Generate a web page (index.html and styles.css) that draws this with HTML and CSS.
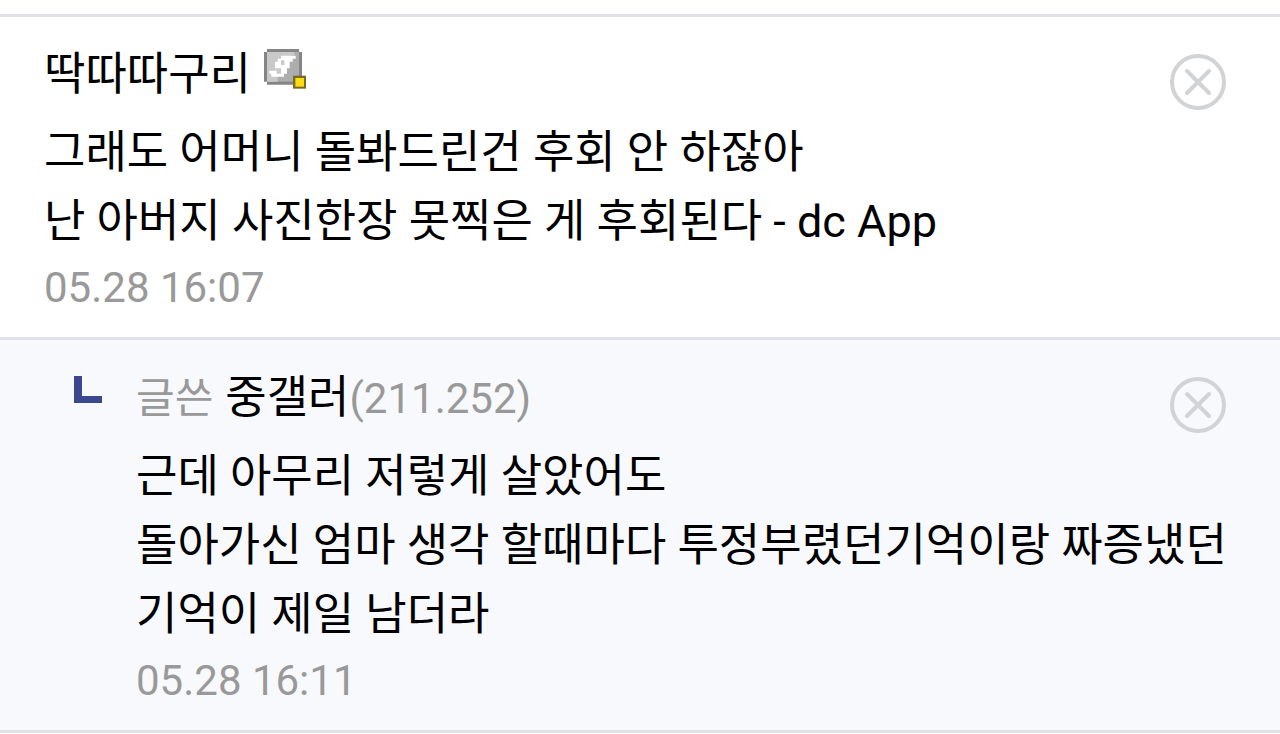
FILE: index.html
```html
<!DOCTYPE html>
<html lang="ko">
<head>
  <meta charset="UTF-8" />
  <meta name="viewport" content="width=device-width, initial-scale=1.0" />
  <title>댓글</title>
  <link rel="stylesheet" href="styles.css">
</head>
<body>
  <ul class="comment-list">
    <li class="comment">
      <div class="comment-body">
        <div class="writer">
          <span class="nick">딱따따구리</span>
          <svg class="nick-icon" viewBox="0 0 132 120" aria-hidden="true">
            <path d="M12 0h96v9h9v89h-9v9H12v-9H3V9h9z" fill="#858585" />
            <path d="M12 9h96v89H12z" fill="#adadad" />
            <path d="M12 9h82v10H84v10H74v10H64v20H54v20H44v19H12z" fill="#c9c9c9" />
            <path fill-rule="evenodd" d="M54 20h44v9h-9v9h-9v20h-8v16h-9v9H25v-9h-6v-9h22v9h13V58H36V38h8v-9h10zM54 34v14h10V34z" fill="#fff" />
            <path d="M90 80h39v39H90z" fill="#7a6a20" />
            <path d="M97 87h26v26H97z" fill="#fbdc16" />
          </svg>
        </div>
        <p class="text">그래도 어머니 돌봐드린건 후회 안 하잖아<br>난 아버지 사진한장 못찍은 게 후회된다 - dc App</p>
        <time class="date">05.28 16:07</time>
      </div>
      <button class="delete" type="button" aria-label="삭제">
        <svg viewBox="0 0 58 58" aria-hidden="true">
          <circle cx="29" cy="29" r="26" />
          <path d="M18 18l22 22M40 18L18 40" />
        </svg>
      </button>
    </li>
    <li class="comment reply">
      <svg class="reply-mark" viewBox="0 0 28 28" aria-hidden="true">
        <path d="M0 0h8v20h20v7H0z" />
      </svg>
      <div class="comment-body">
        <div class="writer">
          <span class="label">글쓴</span>
          <span class="nick">중갤러<span class="ip">(211.252)</span></span>
        </div>
        <p class="text">근데 아무리 저렇게 살았어도<br>돌아가신 엄마 생각 할때마다 투정부렸던기억이랑 짜증냈던기억이 제일 남더라</p>
        <time class="date">05.28 16:11</time>
      </div>
      <button class="delete" type="button" aria-label="삭제">
        <svg viewBox="0 0 58 58" aria-hidden="true">
          <circle cx="29" cy="29" r="26" />
          <path d="M18 18l22 22M40 18L18 40" />
        </svg>
      </button>
    </li>
  </ul>
</body>
</html>
```
FILE: styles.css
```css
body {
  margin: 0;
  padding-top: 14px;
  background: #fff;
  color: #000;
  font-family: Roboto, "Noto Sans CJK KR", sans-serif;
  font-size: 45px;
}
.comment-list {
  margin: 0;
  padding: 0;
  list-style: none;
  border-top: 3px solid #e0e1ea;
}
.comment {
  position: relative;
  padding: 22px 44px 17px;
  border-bottom: 3px solid #e0e1ea;
}
.reply {
  display: flex;
  gap: 34px;
  padding-left: 74px;
  background: #f8f9fc;
}
.writer {
  display: flex;
  align-items: center;
  gap: 12px;
  line-height: 72px;
  margin-bottom: 7px;
}
.nick-icon {
  width: 44px;
  height: 40px;
  margin-bottom: 12px;
}
.label, .ip, .date {
  color: #999;
  font-size: 42px;
}
.text {
  margin: 0;
  line-height: 69px;
  word-break: break-all;
}
.date {
  display: block;
  line-height: 64px;
}
.reply .comment-body {
  flex: 1;
  margin-right: -10px;
}
.reply-mark {
  flex: none;
  width: 28px;
  height: 28px;
  margin-top: 14px;
  fill: #3b4890;
}
.delete {
  position: absolute;
  top: 36px;
  right: 53px;
  width: 58px;
  height: 58px;
  padding: 0;
  border: 0;
  background: none;
}
.delete svg {
  display: block;
  fill: none;
  stroke: #d2d3d5;
  stroke-width: 4;
  stroke-linecap: round;
}
```
